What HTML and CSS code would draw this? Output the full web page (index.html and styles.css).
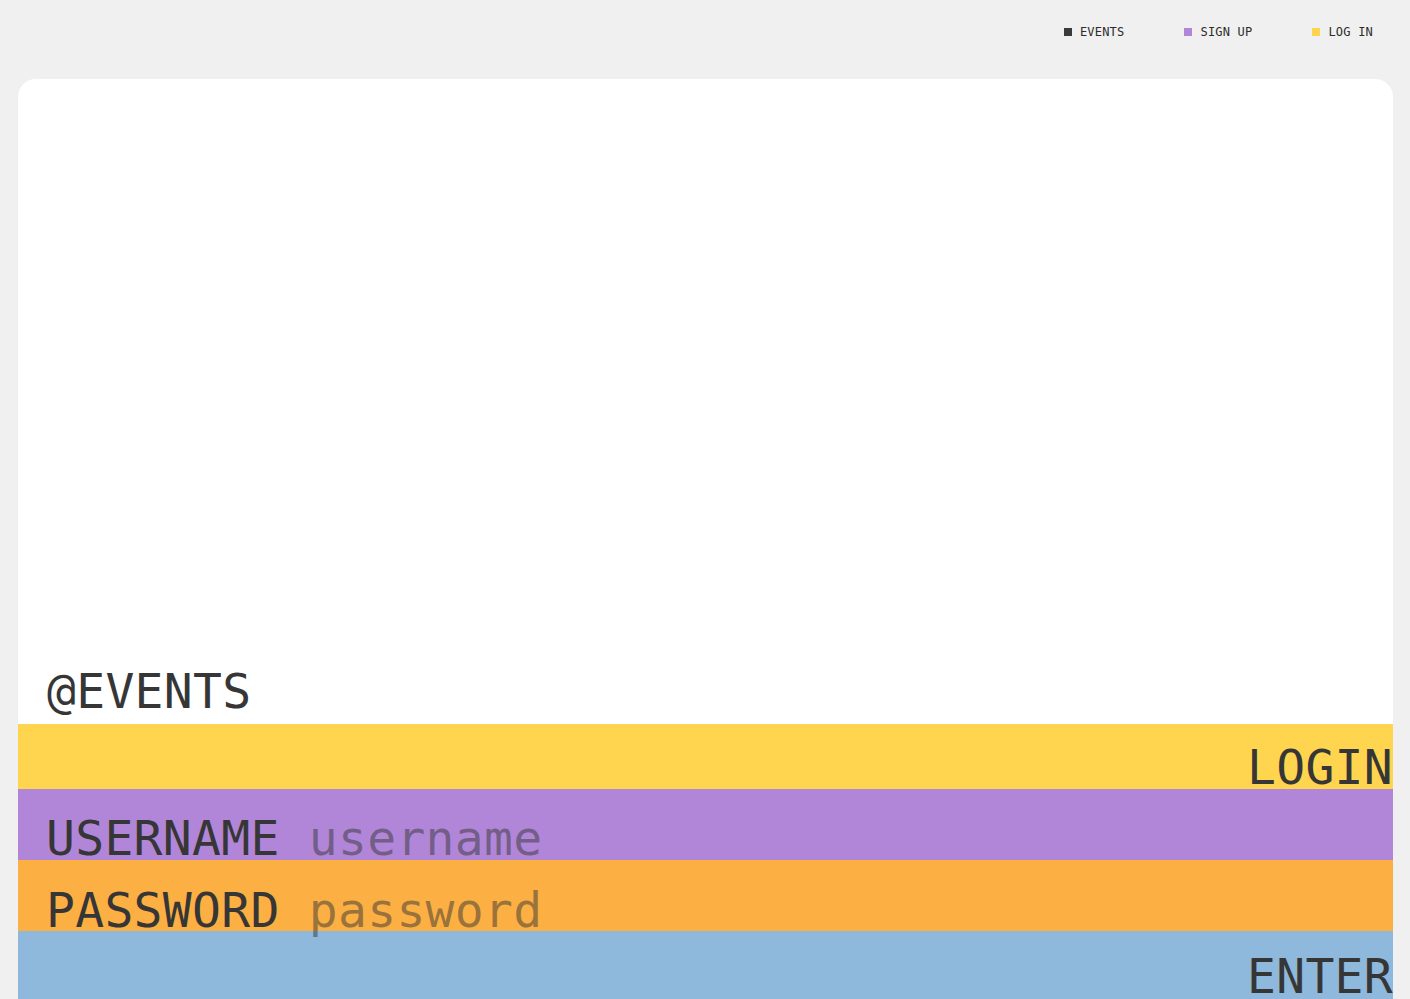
FILE: index.html
```html
<!DOCTYPE html>
<html lang="en">
<head>
<meta charset="utf-8">
<title>@EVENTS — Login</title>
<link rel="stylesheet" href="styles.css">
</head>
<body>
  <nav class="nav">
    <a class="nav-item" href="#"><span class="dot dot-dark"></span>EVENTS</a>
    <a class="nav-item" href="#"><span class="dot dot-purple"></span>SIGN UP</a>
    <a class="nav-item" href="#"><span class="dot dot-yellow"></span>LOG IN</a>
  </nav>
  <main class="card">
    <div class="hero"></div>
    <h1 class="title">@EVENTS</h1>
    <div class="band band-yellow"><span class="right">LOGIN</span></div>
    <div class="band band-purple"><span class="label">USERNAME</span> <span class="placeholder">username</span></div>
    <div class="band band-orange"><span class="label">PASSWORD</span> <span class="placeholder">password</span></div>
    <div class="band band-blue"><span class="right">ENTER</span></div>
  </main>
</body>
</html>
```

FILE: styles.css
```css
* { box-sizing: border-box; }

html, body {
  margin: 0;
  padding: 0;
  background: #f0f0f0;
}

body {
  padding: 0 17px 0 18px;
  font-family: "DejaVu Sans Mono", "Liberation Mono", monospace;
  color: #363636;
}

.nav {
  height: 64px;
  display: flex;
  justify-content: flex-end;
  align-items: center;
  gap: 60px;
  padding-right: 20px;
}

.nav-item {
  display: flex;
  align-items: center;
  gap: 8px;
  font-size: 12px;
  letter-spacing: 0.2px;
  color: #2c2c2c;
  text-decoration: none;
}

.dot {
  width: 8px;
  height: 8px;
  display: inline-block;
}
.dot-dark { background: #3a3a3a; }
.dot-purple { background: #b186d8; }
.dot-yellow { background: #ffd54f; }

.card {
  margin-top: 15px;
  background: #fff;
  border-radius: 18px 18px 0 0;
  min-height: 1000px;
}

.hero {
  height: 588px;
}

.title {
  margin: 0;
  height: 57px;
  padding-left: 29px;
  font-size: 48px;
  line-height: 48px;
  letter-spacing: 0.3px;
  font-weight: normal;
}

.band {
  font-size: 48px;
  line-height: 48px;
  letter-spacing: 0.3px;
  padding-left: 28px;
  white-space: pre;
}

.band-yellow {
  background: #ffd54f;
  height: 65px;
  padding-top: 19px;
  text-align: right;
  padding-left: 0;
}
.band-purple {
  background: #b186d8;
  height: 71px;
  padding-top: 25px;
}
.band-orange {
  background: #fcaf43;
  height: 71px;
  padding-top: 26px;
}
.band-blue {
  background: #8eb8dc;
  min-height: 400px;
  padding-top: 21px;
  text-align: right;
  padding-left: 0;
}

.right {
  display: inline-block;
}

.placeholder {
  color: rgba(54, 54, 54, 0.5);
}
```
